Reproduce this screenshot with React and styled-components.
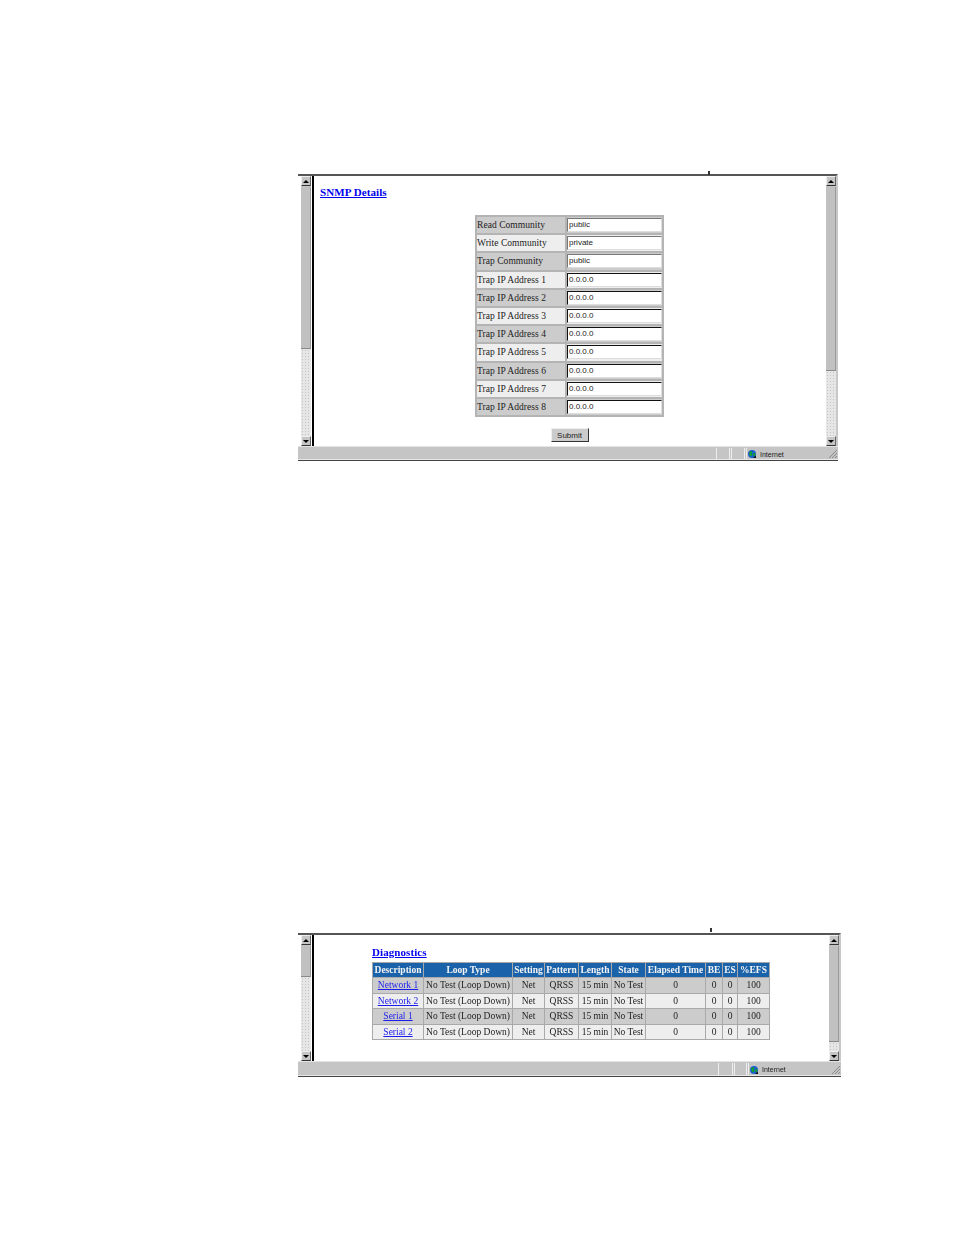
import React from "react";
import styled, { createGlobalStyle } from "styled-components";

const GlobalStyle = createGlobalStyle`
  html, body {
    margin: 0;
    padding: 0;
    background: #fff;
  }
  body {
    font-family: "Liberation Serif", "Times New Roman", serif;
  }
`;

const Page = styled.div`
  width: 954px;
  height: 1235px;
  padding: 172px 0 0 298px;
  box-sizing: border-box;
  filter: blur(0.3px);
`;

const Window = styled.div`
  position: relative;
  display: flex;
  flex-direction: column;
  width: ${props => props.$width}px;
  height: ${props => props.$height}px;
  margin-bottom: ${props => props.$gap}px;
  padding-top: ${props => props.$top}px;
  box-sizing: border-box;
`;

const Tick = styled.div`
  position: absolute;
  top: -1px;
  left: ${props => props.$left}px;
  width: 2px;
  height: 4px;
  background: #333;
`;

const Frame = styled.div`
  flex: 1;
  min-height: 0;
  display: flex;
  border-top: 2px solid #555;
  border-right: 2px solid #c8c8c8;
  padding-left: 3px;
`;

const ScrollBar = styled.div`
  width: 10px;
  flex: none;
  display: flex;
  flex-direction: column;
  background: #c6c5c6;
`;

const ArrowButton = styled.div`
  height: 10px;
  flex: none;
  box-sizing: border-box;
  display: flex;
  align-items: center;
  justify-content: center;
  background: #c6c5c6;
  border-top: 1px solid #eee;
  border-left: 1px solid #eee;
  border-right: 1px solid #666;
  border-bottom: 1px solid #333;

  &::after {
    content: "";
    width: 0;
    height: 0;
    border-left: 3px solid transparent;
    border-right: 3px solid transparent;
    ${props =>
      props.$down
        ? "border-top: 3px solid #000;"
        : "border-bottom: 3px solid #000;"}
  }
`;

const Thumb = styled.div`
  height: ${props => props.$size}px;
  flex: none;
  box-sizing: border-box;
  background: #c2c1c2;
  border-right: 1px solid #999;
  border-bottom: 1px solid #888;
  margin-top: 1px;
`;

const Track = styled.div`
  flex: 1;
  background-color: #e6e6e6;
  background-image: radial-gradient(#c4c4c4 35%, transparent 45%);
  background-size: 3px 3px;
`;

const Content = styled.div`
  flex: 1;
  min-width: 0;
  margin-left: 1px;
  border-left: 2px solid #000;
  background: #fff;
  margin-right: ${props => props.$inset}px;
  overflow: hidden;
`;

const Heading = styled.a`
  display: block;
  width: fit-content;
  font-size: 11px;
  font-weight: 700;
  letter-spacing: 0.08px;
  line-height: 13px;
  color: #0000ee;
  text-decoration: underline;
`;

const SnmpBody = styled.div`
  padding: 10px 0 0 6px;
`;

const FormTable = styled.table`
  width: 189px;
  margin: 16px auto 0;
  transform: translateX(-3px);
  border-collapse: separate;
  border-spacing: 2px 2px;
  background: #b4b4b4;
  table-layout: fixed;
`;

const FormRow = styled.tr`
  height: 16.2px;
  background: ${props => (props.$odd ? "#cccccc" : "#eeeeee")};
`;

const LabelCell = styled.td`
  width: 88px;
  padding: 0;
  font-size: 9.5px;
  letter-spacing: 0.05px;
  line-height: 12px;
  color: #222;
  white-space: nowrap;
`;

const FieldCell = styled.td`
  padding: 0;
`;

const Field = styled.input`
  display: block;
  width: 95px;
  height: 14px;
  margin: 1px 0;
  padding: 0 0 1px 1px;
  box-sizing: border-box;
  background: #fff;
  border: none;
  border-top: 1px solid ${props => (props.$dark ? "#111" : "#777")};
  border-left: 1px solid ${props => (props.$dark ? "#111" : "#777")};
  border-right: 1px solid #ddd;
  border-bottom: 1px solid #ddd;
  font-family: "Liberation Sans", Arial, sans-serif;
  font-size: 8px;
  color: #222;
  outline: none;
`;

const SubmitRow = styled.div`
  display: flex;
  justify-content: center;
  margin: 11px 6px 0 0;
`;

const SubmitButton = styled.button`
  width: 38px;
  height: 14px;
  padding: 0;
  background: #cccbcc;
  border: 1px solid;
  border-color: #eee #333 #333 #eee;
  font-family: "Liberation Sans", Arial, sans-serif;
  font-size: 8px;
  color: #222;
`;

const DiagBody = styled.div`
  width: fit-content;
  margin: 11px 0 0 58px;
`;

const DiagTable = styled.table`
  width: 398px;
  margin-top: 3px;
  border-collapse: separate;
  border-spacing: 1px;
  background: #a9a9a9;
  table-layout: fixed;
`;

const HeadCell = styled.th`
  height: 14px;
  padding: 0;
  background: #1a63ab;
  color: #f4f4f4;
  font-size: 9.5px;
  line-height: 12px;
  font-weight: 700;
  text-align: center;
  white-space: nowrap;
  overflow: hidden;
`;

const DiagRow = styled.tr`
  background: ${props => (props.$odd ? "#cccccc" : "#eeeeee")};
`;

const DiagCell = styled.td`
  height: 14.5px;
  padding: 0;
  font-size: 9.5px;
  line-height: 12px;
  color: #222;
  text-align: center;
  white-space: nowrap;
  overflow: hidden;
`;

const RowLink = styled.a`
  color: #1c1cee;
  text-decoration: underline;
`;

const StatusBar = styled.div`
  height: ${props => props.$height}px;
  flex: none;
  box-sizing: border-box;
  display: flex;
  align-items: stretch;
  justify-content: flex-end;
  background: #c6c5c6;
  border-top: 1px solid #e4e4e4;
  border-bottom: 1px solid #444;
  box-shadow: inset 0 -1px 0 #e8e8e8;
`;

const StatusPanel = styled.div`
  width: ${props => props.$width}px;
  box-sizing: border-box;
  margin: 1px 0 1px 1px;
  border-left: 1px solid #eee;
  border-right: 1px solid #eee;
`;

const ZonePanel = styled.div`
  width: ${props => props.$width}px;
  box-sizing: border-box;
  display: flex;
  align-items: center;
  gap: 4px;
  margin: 1px 0 1px 1px;
  padding: 1px 0 0 1px;
  border-left: 1px solid #eee;
  font-family: "Liberation Sans", Arial, sans-serif;
  font-size: 7px;
  color: #222;
`;

const Grip = styled.svg`
  margin-left: auto;
  align-self: flex-end;
  flex: none;
`;

const Globe = () => (
  <svg width="8" height="8" viewBox="0 0 8 8">
    <circle cx="4" cy="4" r="4" fill="#1a5fd0" />
    <path d="M1 2.5 3 1l1.5 1-1 1.5 1 1.5-1.5 1.5L1.5 5z" fill="#12a030" />
    <path d="M5 3.5 7.5 3 7 6 5.5 6z" fill="#12a030" />
    <path d="M6 7 8 5.5V8H5z" fill="#111" />
  </svg>
);

const GripLines = () => (
  <Grip width="10" height="10" viewBox="0 0 10 10">
    <path d="M9 1 1 9M9 4 4 9M9 7 7 9" stroke="#8a8a8a" strokeWidth="1" fill="none" />
  </Grip>
);

const Bar = ({ thumb }) => (
  <ScrollBar>
    <ArrowButton />
    <Thumb $size={thumb} />
    <Track />
    <ArrowButton $down />
  </ScrollBar>
);

const Status = ({ height, first, second, zone }) => (
  <StatusBar $height={height}>
    <StatusPanel $width={first} />
    <StatusPanel $width={second} />
    <ZonePanel $width={zone}>
      <Globe />
      Internet
      <GripLines />
    </ZonePanel>
  </StatusBar>
);

const snmpRows = [
  ["Read Community", "public"],
  ["Write Community", "private"],
  ["Trap Community", "public"],
  ["Trap IP Address 1", "0.0.0.0"],
  ["Trap IP Address 2", "0.0.0.0"],
  ["Trap IP Address 3", "0.0.0.0"],
  ["Trap IP Address 4", "0.0.0.0"],
  ["Trap IP Address 5", "0.0.0.0"],
  ["Trap IP Address 6", "0.0.0.0"],
  ["Trap IP Address 7", "0.0.0.0"],
  ["Trap IP Address 8", "0.0.0.0"],
];

const diagColumns = [
  ["Description", 50],
  ["Loop Type", 88],
  ["Setting", 31],
  ["Pattern", 33],
  ["Length", 32],
  ["State", 33],
  ["Elapsed Time", 59],
  ["BE", 16],
  ["ES", 14],
  ["%EFS", 31],
];

const diagRows = ["Network 1", "Network 2", "Serial 1", "Serial 2"];

const App = () => {
  return (
    <Page>
      <GlobalStyle />
      <Window $width={540} $height={289} $gap={468} $top={2}>
        <Tick $left={410} />
        <Frame>
          <Bar thumb={162} />
          <Content $inset={1}>
            <SnmpBody>
              <Heading>SNMP Details</Heading>
              <FormTable>
                <tbody>
                  {snmpRows.map(([label, value], i) => (
                    <FormRow key={label} $odd={i % 2 === 0}>
                      <LabelCell>{label}</LabelCell>
                      <FieldCell>
                        <Field defaultValue={value} $dark={i > 2} />
                      </FieldCell>
                    </FormRow>
                  ))}
                </tbody>
              </FormTable>
              <SubmitRow>
                <SubmitButton>Submit</SubmitButton>
              </SubmitRow>
            </SnmpBody>
          </Content>
          <Bar thumb={184} />
        </Frame>
        <Status height={15} first={14} second={14} zone={92} />
      </Window>

      <Window $width={543} $height={148} $gap={0} $top={4}>
        <Tick $left={412} />
        <Frame>
          <Bar thumb={31} />
          <Content $inset={0}>
            <DiagBody>
              <Heading>Diagnostics</Heading>
              <DiagTable>
                <colgroup>
                  {diagColumns.map(([name, width]) => (
                    <col key={name} style={{ width }} />
                  ))}
                </colgroup>
                <thead>
                  <tr>
                    {diagColumns.map(([name]) => (
                      <HeadCell key={name}>{name}</HeadCell>
                    ))}
                  </tr>
                </thead>
                <tbody>
                  {diagRows.map((name, i) => (
                    <DiagRow key={name} $odd={i % 2 === 0}>
                      <DiagCell>
                        <RowLink>{name}</RowLink>
                      </DiagCell>
                      <DiagCell>No Test (Loop Down)</DiagCell>
                      <DiagCell>Net</DiagCell>
                      <DiagCell>QRSS</DiagCell>
                      <DiagCell>15 min</DiagCell>
                      <DiagCell>No Test</DiagCell>
                      <DiagCell>0</DiagCell>
                      <DiagCell>0</DiagCell>
                      <DiagCell>0</DiagCell>
                      <DiagCell>100</DiagCell>
                    </DiagRow>
                  ))}
                </tbody>
              </DiagTable>
            </DiagBody>
          </Content>
          <Bar thumb={96} />
        </Frame>
        <Status height={16} first={15} second={13} zone={93} />
      </Window>
    </Page>
  );
};

export default App;
